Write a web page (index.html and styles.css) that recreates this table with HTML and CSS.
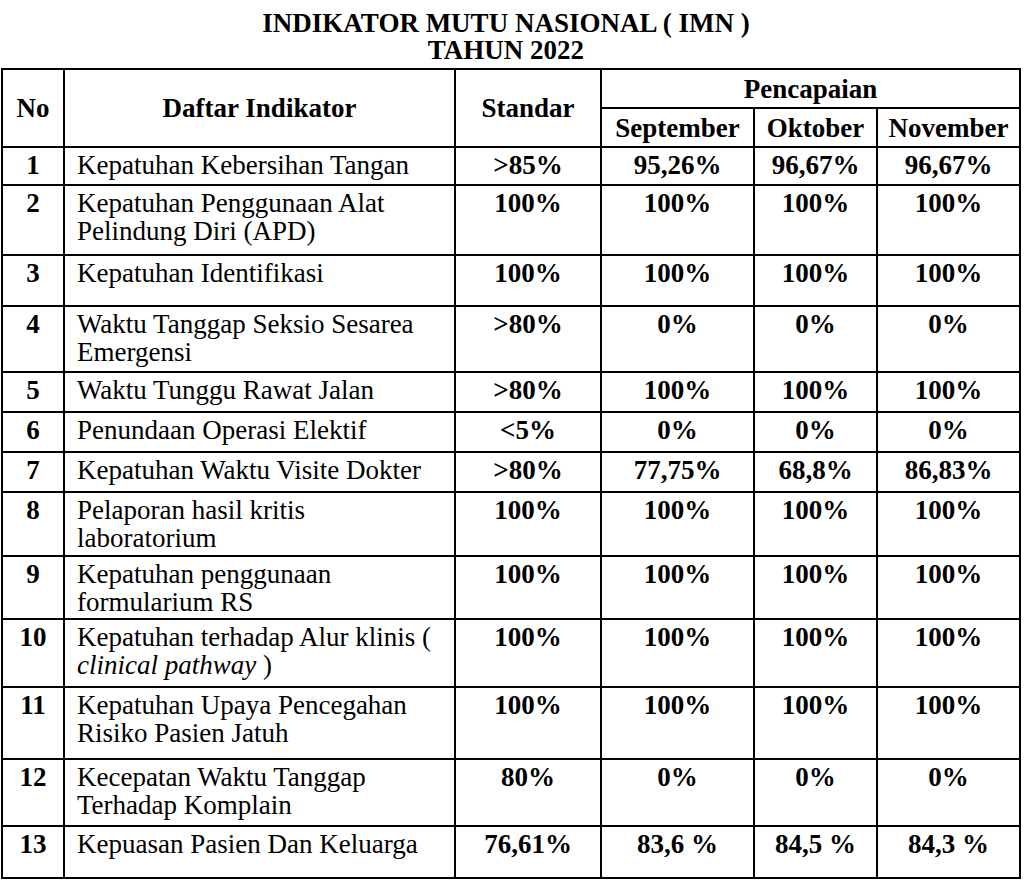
FILE: index.html
```html
<!DOCTYPE html>
<html lang="id">
<head>
  <meta charset="UTF-8" />
  <meta name="viewport" content="width=device-width, initial-scale=1.0"/>
  <title>Indikator Mutu Nasional 2022</title>
  <link rel="stylesheet" href="styles.css">
</head>

<body>

<div class="title">
  INDIKATOR MUTU NASIONAL ( IMN )<br>
  TAHUN 2022
</div>

<table class="imn-table">
  <colgroup>
    <col class="col-no">
    <col class="col-name">
    <col class="col-std">
    <col class="col-sep">
    <col class="col-okt">
    <col class="col-nov">
  </colgroup>
  <thead>
    <tr>
      <th rowspan="2">No</th>
      <th rowspan="2">Daftar Indikator</th>
      <th rowspan="2">Standar</th>
      <th colspan="3">Pencapaian</th>
    </tr>
    <tr>
      <th>September</th>
      <th>Oktober</th>
      <th>November</th>
    </tr>
  </thead>
  <tbody>
    <tr>
      <td class="no">1</td>
      <td class="name">Kepatuhan Kebersihan Tangan</td>
      <td class="val">&gt;85%</td>
      <td class="val">95,26%</td>
      <td class="val">96,67%</td>
      <td class="val">96,67%</td>
    </tr>
    <tr>
      <td class="no">2</td>
      <td class="name">Kepatuhan Penggunaan Alat<br>Pelindung Diri (APD)</td>
      <td class="val">100%</td>
      <td class="val">100%</td>
      <td class="val">100%</td>
      <td class="val">100%</td>
    </tr>
    <tr>
      <td class="no">3</td>
      <td class="name">Kepatuhan Identifikasi</td>
      <td class="val">100%</td>
      <td class="val">100%</td>
      <td class="val">100%</td>
      <td class="val">100%</td>
    </tr>
    <tr>
      <td class="no">4</td>
      <td class="name">Waktu Tanggap Seksio Sesarea<br>Emergensi</td>
      <td class="val">&gt;80%</td>
      <td class="val">0%</td>
      <td class="val">0%</td>
      <td class="val">0%</td>
    </tr>
    <tr>
      <td class="no">5</td>
      <td class="name">Waktu Tunggu Rawat Jalan</td>
      <td class="val">&gt;80%</td>
      <td class="val">100%</td>
      <td class="val">100%</td>
      <td class="val">100%</td>
    </tr>
    <tr>
      <td class="no">6</td>
      <td class="name">Penundaan Operasi Elektif</td>
      <td class="val">&lt;5%</td>
      <td class="val">0%</td>
      <td class="val">0%</td>
      <td class="val">0%</td>
    </tr>
    <tr>
      <td class="no">7</td>
      <td class="name">Kepatuhan Waktu Visite Dokter</td>
      <td class="val">&gt;80%</td>
      <td class="val">77,75%</td>
      <td class="val">68,8%</td>
      <td class="val">86,83%</td>
    </tr>
    <tr>
      <td class="no">8</td>
      <td class="name">Pelaporan hasil kritis<br>laboratorium</td>
      <td class="val">100%</td>
      <td class="val">100%</td>
      <td class="val">100%</td>
      <td class="val">100%</td>
    </tr>
    <tr>
      <td class="no">9</td>
      <td class="name">Kepatuhan penggunaan<br>formularium RS</td>
      <td class="val">100%</td>
      <td class="val">100%</td>
      <td class="val">100%</td>
      <td class="val">100%</td>
    </tr>
    <tr>
      <td class="no">10</td>
      <td class="name">Kepatuhan terhadap Alur klinis (<br><em>clinical pathway</em> )</td>
      <td class="val">100%</td>
      <td class="val">100%</td>
      <td class="val">100%</td>
      <td class="val">100%</td>
    </tr>
    <tr>
      <td class="no">11</td>
      <td class="name">Kepatuhan Upaya Pencegahan<br>Risiko Pasien Jatuh</td>
      <td class="val">100%</td>
      <td class="val">100%</td>
      <td class="val">100%</td>
      <td class="val">100%</td>
    </tr>
    <tr>
      <td class="no">12</td>
      <td class="name">Kecepatan Waktu Tanggap<br>Terhadap Komplain</td>
      <td class="val">80%</td>
      <td class="val">0%</td>
      <td class="val">0%</td>
      <td class="val">0%</td>
    </tr>
    <tr>
      <td class="no">13</td>
      <td class="name">Kepuasan Pasien Dan Keluarga</td>
      <td class="val">76,61%</td>
      <td class="val">83,6 %</td>
      <td class="val">84,5 %</td>
      <td class="val">84,3 %</td>
    </tr>
  </tbody>
</table>

</body>
</html>
```

FILE: styles.css
```css
html, body {
    margin: 0;
    padding: 0;
    background: #fff;
    color: #000;
    font-family: "Liberation Serif", "Times New Roman", serif;
}

.title {
    width: 1012px;
    padding-top: 10px;
    margin-bottom: 4px;
    text-align: center;
    font-size: 27px;
    line-height: 27px;
    font-weight: bold;
}

.imn-table {
    margin-left: 1px;
    width: 1020px;
    border-collapse: collapse;
    table-layout: fixed;
    font-size: 27px;
    line-height: 28px;
}

.col-no   { width: 62px; }
.col-name { width: 391px; }
.col-std  { width: 146px; }
.col-sep  { width: 153px; }
.col-okt  { width: 123px; }
.col-nov  { width: 143px; }

.imn-table th,
.imn-table td {
    border: 2px solid #000;
    padding: 3px 9px 0;
    vertical-align: top;
}

thead tr { height: 39px; }

.imn-table th {
    padding: 0 4px;
    vertical-align: middle;
    text-align: center;
    font-weight: bold;
}

.imn-table .name { padding-left: 12px; }

.imn-table .no,
.imn-table .val {
    text-align: center;
    font-weight: bold;
}

.imn-table .no { padding: 3px 0 0; }

.imn-table em { font-style: italic; }

/* row heights follow the original document */
tbody tr:nth-child(1)  { height: 38px; }
tbody tr:nth-child(2)  { height: 70px; }
tbody tr:nth-child(3)  { height: 51px; }
tbody tr:nth-child(4)  { height: 66px; }
tbody tr:nth-child(5)  { height: 40px; }
tbody tr:nth-child(6)  { height: 40px; }
tbody tr:nth-child(7)  { height: 40px; }
tbody tr:nth-child(8)  { height: 64px; }
tbody tr:nth-child(9)  { height: 63px; }
tbody tr:nth-child(10) { height: 68px; }
tbody tr:nth-child(11) { height: 72px; }
tbody tr:nth-child(12) { height: 67px; }
tbody tr:nth-child(13) { height: 52px; }
```
